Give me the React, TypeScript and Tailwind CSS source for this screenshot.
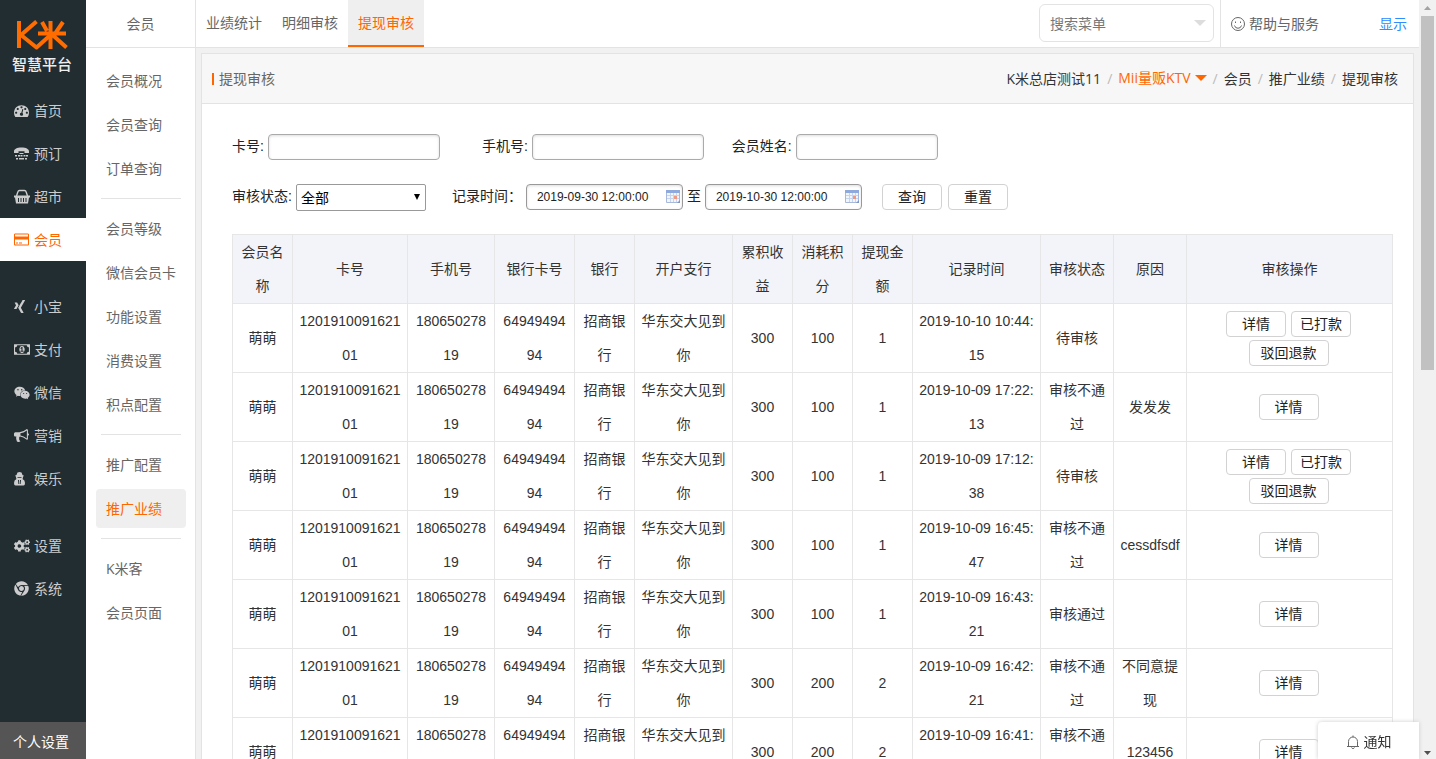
import type { ReactNode } from "react"
import { FaChrome, FaCogs, FaWeixin, FaXing } from "react-icons/fa"

function DashboardIcon({ className }: { className?: string }) {
  return (
    <svg viewBox="0 0 1792 1792" fill="currentColor" className={className}>
      <path d="M384 1152q0-53-37.5-90.5t-90.5-37.5-90.5 37.5-37.5 90.5 37.5 90.5 90.5 37.5 90.5-37.5 37.5-90.5zm192-448q0-53-37.5-90.5t-90.5-37.5-90.5 37.5-37.5 90.5 37.5 90.5 90.5 37.5 90.5-37.5 37.5-90.5zm428 481l101-382q6-26-7.5-48.5t-38.5-29.5-48 6.5-30 39.5l-101 382q-60 5-107 43.5t-63 98.5q-20 77 20 146t117 89 146-20 89-117q16-60-6-117t-72-91zm660-33q0-53-37.5-90.5t-90.5-37.5-90.5 37.5-37.5 90.5 37.5 90.5 90.5 37.5 90.5-37.5 37.5-90.5zm-640-640q0-53-37.5-90.5t-90.5-37.5-90.5 37.5-37.5 90.5 37.5 90.5 90.5 37.5 90.5-37.5 37.5-90.5zm448 192q0-53-37.5-90.5t-90.5-37.5-90.5 37.5-37.5 90.5 37.5 90.5 90.5 37.5 90.5-37.5 37.5-90.5zm320 448q0 261-141 483-19 29-54 29h-1402q-35 0-54-29-141-221-141-483 0-182 71-348t191-286 286-191 348-71 348 71 286 191 191 286 71 348z" />
    </svg>
  )
}

function PhoneIcon({ className }: { className?: string }) {
  return (
    <svg viewBox="0 0 15 15" fill="currentColor" className={className}>
      <path d="M0 7V5.500C0 3 3 1.500 7.500 1.500S15 3 15 5.500V7h-4.500V5.200h-6V7z" />
      <path d="M1 9h2v1.500H1zM4 9h2v1.500H4zM6.500 9h2v1.500h-2zM9.500 9h2v1.500h-2zM12 9h2v1.500h-2zM2 12h2v1.500H2zM5 12h5v1.500H5zM11 12h2v1.500h-2zM5.500 7h4v1h-4z" />
    </svg>
  )
}

function BasketIcon({ className }: { className?: string }) {
  return (
    <svg viewBox="0 0 16 15" fill="currentColor" className={className}>
      <path d="M2.500 7L4 2.500Q4.300 1.500 5.500 1.500h5Q11.700 1.500 12 2.500L13.500 7" fill="none" stroke="currentColor" strokeWidth="1.400" />
      <path
        fillRule="evenodd"
        d="M0 6.500h16v2h-1L14 14.500H2L1 8.500H0zM4 9v4h1V9zM6.500 9v4h1V9zM9 9v4h1V9zM11.500 9v4h1V9z"
      />
    </svg>
  )
}

function CardIcon({ className }: { className?: string }) {
  return (
    <svg viewBox="0 0 1920 1792" fill="currentColor" className={className}>
      <path d="M1760 128q66 0 113 47t47 113v1216q0 66-47 113t-113 47h-1600q-66 0-113-47t-47-113v-1216q0-66 47-113t113-47h1600zm-1600 128q-13 0-22.5 9.5t-9.5 22.5v224h1664v-224q0-13-9.5-22.5t-22.5-9.5h-1600zm1600 1280q13 0 22.5-9.5t9.5-22.5v-608h-1664v608q0 13 9.5 22.5t22.5 9.5h1600zm-1504-128v-128h256v128h-256zm384 0v-128h384v128h-384z" />
    </svg>
  )
}

function MoneyIcon({ className }: { className?: string }) {
  return (
    <svg viewBox="0 0 1920 1792" fill="currentColor" className={className}>
      <path d="M768 1152h384v-96h-128v-448h-114l-148 137 77 80q42-37 55-57h2v288h-128v96zm512-256q0 70-21 142t-59.5 134-101.5 101-138 39-138-39-101.5-101-59.5-134-21-142 21-142 59.5-134 101.5-101 138-39 138 39 101.5 101 59.5 134 21 142zm512 256v-512q-106 0-181-75t-75-181h-1152q0 106-75 181t-181 75v512q106 0 181 75t75 181h1152q0-106 75-181t181-75zm128-832v1152q0 26-19 45t-45 19h-1792q-26 0-45-19t-19-45v-1152q0-26 19-45t45-19h1792q26 0 45 19t19 45z" />
    </svg>
  )
}

function BullhornIcon({ className }: { className?: string }) {
  return (
    <svg viewBox="0 0 1792 1792" fill="currentColor" className={className}>
      <path d="M1664 640q53 0 90.5 37.5t37.5 90.5-37.5 90.5-90.5 37.5v384q0 52-38 90t-90 38q-417-347-812-380-58 19-91 66t-31 100.5 40 92.5q-20 33-23 65.5t6 58 33.5 55 48 50 61.5 50.5q-29 58-111.5 83t-168.5 11.5-132-55.5q-7-23-29.5-87.5t-32-94.5-23-89-15-101 3.5-98.5 22-110.5h-122q-66 0-113-47t-47-113v-192q0-66 47-113t113-47h480q435 0 896-384 52 0 90 38t38 90v384zm-128 604v-954q-394 302-768 343v270q377 42 768 341z" />
    </svg>
  )
}

function SpyIcon({ className }: { className?: string }) {
  return (
    <svg viewBox="0 0 15 15" fill="currentColor" className={className}>
      <path
        fillRule="evenodd"
        d="M3.500 1.500Q5.500 .5 7.500 1.500L8.500 4 10 4.800 9 5.800Q9 7.500 8.500 8 11 8.800 11 12 11 14.500 9.500 14.500h-8Q0 14.500 0 12 0 8.800 2.500 8 2 7.500 2 5.800L1 4.800 2.500 4zM4 9l.4 4h.8L5 9zM6 9l-.2 4h.8L7 9zM3.500 6v.8h4V6z"
      />
    </svg>
  )
}

function CalendarIcon({ className }: { className?: string }) {
  return (
    <svg viewBox="0 0 14 13" className={className}>
      <rect width="14" height="13" rx="1" fill="#a9b9dc" />
      <rect width="14" height="3" fill="#8fa9dd" />
      <rect x="1" y="3" width="12" height="9" fill="#f1f5fc" />
      <path d="M1 5.500h12M1 8.500h12M4.500 3v9M7.500 3v9M10.500 3v9" stroke="#c6d4ee" />
      <rect x="8" y="6" width="3" height="3" fill="#ee9a80" />
      <path d="M11 13l3-3v3z" fill="#8296c4" />
    </svg>
  )
}

const navGroups = [
  [
    { label: "首页", icon: DashboardIcon, size: "h-[15px] w-[15px]" },
    { label: "预订", icon: PhoneIcon, size: "h-[15px] w-[15px]" },
    { label: "超市", icon: BasketIcon, size: "h-[15px] w-4" },
    { label: "会员", icon: CardIcon, size: "h-[15px] w-[15px]", active: true },
  ],
  [
    { label: "小宝", icon: FaXing, size: "h-[15px] w-[11px]" },
    { label: "支付", icon: MoneyIcon, size: "h-[15px] w-4" },
    { label: "微信", icon: FaWeixin, size: "h-4 w-4" },
    { label: "营销", icon: BullhornIcon, size: "h-[15px] w-[15px]" },
    { label: "娱乐", icon: SpyIcon, size: "h-[15px] w-[15px]" },
  ],
  [
    { label: "设置", icon: FaCogs, size: "h-4 w-4" },
    { label: "系统", icon: FaChrome, size: "h-[15px] w-[15px]" },
  ],
]

const menuGroups = [
  ["会员概况", "会员查询", "订单查询"],
  ["会员等级", "微信会员卡", "功能设置", "消费设置", "积点配置"],
  ["推广配置", "推广业绩"],
  ["K米客", "会员页面"],
]

const tabs = ["业绩统计", "明细审核", "提现审核"]

const columns = [
  { title: "会员名称", width: "w-[60px]" },
  { title: "卡号", width: "w-[115px]" },
  { title: "手机号", width: "w-[87px]" },
  { title: "银行卡号", width: "w-[80px]" },
  { title: "银行", width: "w-[60px]" },
  { title: "开户支行", width: "w-[98px]" },
  { title: "累积收益", width: "w-[60px]" },
  { title: "消耗积分", width: "w-[60px]" },
  { title: "提现金额", width: "w-[60px]" },
  { title: "记录时间", width: "w-[128px]" },
  { title: "审核状态", width: "w-[73px]" },
  { title: "原因", width: "w-[73px]" },
  { title: "审核操作", width: "" },
]

const records = [
  { points: 100, amount: 1, time: "2019-10-10 10:44:15", status: "待审核", reason: "" },
  { points: 100, amount: 1, time: "2019-10-09 17:22:13", status: "审核不通过", reason: "发发发" },
  { points: 100, amount: 1, time: "2019-10-09 17:12:38", status: "待审核", reason: "" },
  { points: 100, amount: 1, time: "2019-10-09 16:45:47", status: "审核不通过", reason: "cessdfsdf" },
  { points: 100, amount: 1, time: "2019-10-09 16:43:21", status: "审核通过", reason: "" },
  { points: 200, amount: 2, time: "2019-10-09 16:42:21", status: "审核不通过", reason: "不同意提现" },
  { points: 200, amount: 2, time: "2019-10-09 16:41:08", status: "审核不通过", reason: "123456" },
]

function Button({ children, wide }: { children: ReactNode; wide?: boolean }) {
  return (
    <button
      type="button"
      className={`h-[26px] rounded border border-[#d2d2d2] bg-white text-sm leading-6 text-[#222] ${wide ? "w-20" : "w-[60px]"}`}
    >
      {children}
    </button>
  )
}

function TextField({ id, label, width }: { id: string; label: string; width: string }) {
  return (
    <div className="flex gap-1">
      <label htmlFor={id}>{label}</label>
      <input
        id={id}
        type="text"
        className={`h-[26px] rounded border border-[#aaa] bg-white px-2 shadow-[inset_0_1px_3px_#ddd] ${width}`}
      />
    </div>
  )
}

function DateField({ label, value }: { label: string; value: string }) {
  return (
    <div className="relative">
      <input
        type="text"
        aria-label={label}
        defaultValue={value}
        className="block h-[26px] w-[157px] rounded border border-[#999] bg-white pl-[10px] text-xs text-[#222] shadow-[inset_0_1px_3px_#ddd]"
      />
      <CalendarIcon className="absolute top-[6px] right-[3px] h-[13px] w-[14px]" />
    </div>
  )
}

function Logo() {
  return (
    <div className="flex h-[89px] flex-col items-center pt-5 pr-[2px]">
      <svg viewBox="0 0 52 30" fill="none" stroke="#ff6c00" strokeWidth="4" className="h-[30px] w-[52px]">
        <path d="M3 1v27M20.500 1.500 5 15l15.500 12.500L34.500 15" strokeLinejoin="round" />
        <path d="M34.500 1v28M22 13.500h28M26 2l5 9M47 2l-7.500 11M36 14.500l14.500 13" />
      </svg>
      <div className="mt-1 text-[15px] leading-5 font-medium text-[#eee]">智慧平台</div>
    </div>
  )
}

function MainNav() {
  return (
    <aside className="flex w-[86px] shrink-0 flex-col bg-[#222d32]">
      <Logo />
      <nav className="flex flex-1 flex-col gap-6">
        {navGroups.map((group) => (
          <div key={group[0].label}>
            {group.map((item) => (
              <a
                key={item.label}
                href="#"
                className={`flex h-[43px] items-center gap-[5px] pl-[14px] ${"active" in item ? "bg-white text-[#ff6600]" : "text-[#ccc]"}`}
              >
                <span className="flex w-[15px]">
                  <item.icon className={`shrink-0 ${item.size}`} />
                </span>
                {item.label}
              </a>
            ))}
          </div>
        ))}
      </nav>
      <button type="button" className="h-[37px] bg-[#555] pt-[2px] pr-1 text-white">
        个人设置
      </button>
    </aside>
  )
}

function SubMenu() {
  return (
    <aside className="w-[110px] shrink-0 border-r border-[#e3e3e3] bg-white text-[#666]">
      <h2 className="h-12 border-b border-[#e3e3e3] text-center leading-[47px]">会员</h2>
      <nav className="pt-[13px]">
        {menuGroups.map((group, index) => (
          <div key={group[0]}>
            {index > 0 && <hr className="my-[10px] mr-[14px] ml-[15px] border-[#e3e3e3]" />}
            <div className="flex flex-col gap-[5px] pr-[9px] pl-[10px]">
              {group.map((item) => (
                <a
                  key={item}
                  href="#"
                  className={`h-[39px] rounded-sm pl-[10px] leading-[39px] whitespace-nowrap ${item === "推广业绩" ? "bg-[#efefef] text-[#ff6600]" : ""}`}
                >
                  {item}
                </a>
              ))}
            </div>
          </div>
        ))}
      </nav>
    </aside>
  )
}

function TopBar() {
  return (
    <header className="flex h-12 shrink-0 border-b border-[#e3e3e3] bg-white text-[#666]">
      <nav className="flex flex-1">
        {tabs.map((tab) => (
          <a
            key={tab}
            href="#"
            className={`px-[10px] leading-[46px] ${tab === "提现审核" ? "border-b-2 border-[#ff6600] bg-[#efefef] text-[#ff6600]" : ""}`}
          >
            {tab}
          </a>
        ))}
      </nav>
      <div className="relative mt-1 mr-[6px] h-[38px] w-[175px]">
        <input
          type="text"
          aria-label="搜索菜单"
          placeholder="搜索菜单"
          className="h-full w-full rounded-md border border-[#e3e3e3] px-[10px] placeholder:text-[#777]"
        />
        <svg viewBox="0 0 12 6" className="absolute top-4 right-2 h-[6px] w-3">
          <path d="M0 0h12L6 6z" fill="#ddd" />
        </svg>
      </div>
      <div className="flex w-[199px] items-center justify-between border-l border-[#e3e3e3] pr-3 pl-[10px]">
        <a href="#" className="flex items-center gap-1">
          <svg viewBox="0 0 14 14" fill="none" stroke="#666" className="h-[14px] w-[14px]">
            <circle cx="7" cy="7" r="6.500" />
            <path d="M3.500 8.500a3.600 3.600 0 0 0 7 0M4.500 4.500v1.500M9.500 4.500v1.500" />
          </svg>
          帮助与服务
        </a>
        <a href="#" className="text-[#2d8cff]">
          显示
        </a>
      </div>
    </header>
  )
}

function Breadcrumb() {
  return (
    <nav className="flex items-center gap-[6px] text-[#333]">
      <a href="#">K米总店测试11</a>
      <span className="text-[#bbb]">/</span>
      <a href="#" className="flex items-center gap-1 pb-[2px] text-[#ff6600]">
        Mii量贩KTV
        <svg viewBox="0 0 12 6" className="h-[6px] w-3">
          <path d="M0 0h12L6 6z" fill="currentColor" />
        </svg>
      </a>
      <span className="text-[#bbb]">/</span>
      <a href="#">会员</a>
      <span className="text-[#bbb]">/</span>
      <a href="#">推广业绩</a>
      <span className="text-[#bbb]">/</span>
      <span>提现审核</span>
    </nav>
  )
}

function Filters() {
  return (
    <form className="font-['Liberation_Sans','Noto_Sans_CJK_SC',sans-serif] leading-6 text-[#222]">
      <div className="flex">
        <TextField id="card" label="卡号:" width="w-[172px]" />
        <div className="ml-[42px]">
          <TextField id="phone" label="手机号:" width="w-[172px]" />
        </div>
        <div className="ml-7">
          <TextField id="name" label="会员姓名:" width="w-[142px]" />
        </div>
      </div>
      <div className="mt-6 flex">
        <div className="flex gap-1">
          <label htmlFor="status">审核状态:</label>
          <div className="relative">
            <select
              id="status"
              className="block h-[27px] w-[130px] appearance-none rounded-xs border border-[#999] bg-white pl-1 text-black"
            >
              <option>全部</option>
              <option>待审核</option>
              <option>审核通过</option>
              <option>审核不通过</option>
            </select>
            <svg viewBox="0 0 6 6" className="pointer-events-none absolute top-[10px] right-[6px] h-[6px] w-[6px]">
              <path d="M0 0h6L3 6z" />
            </svg>
          </div>
        </div>
        <div className="ml-[26px] flex gap-1">
          <span>记录时间：</span>
          <DateField label="开始时间" value="2019-09-30 12:00:00" />
          <span>至</span>
          <DateField label="结束时间" value="2019-10-30 12:00:00" />
        </div>
        <div className="ml-5 flex gap-[6px]">
          <Button>查询</Button>
          <Button>重置</Button>
        </div>
      </div>
    </form>
  )
}

function RecordTable() {
  const cell = "border border-[#e6e6e6] px-[5px] py-0 font-normal"
  return (
    <table className="mt-[23px] w-full table-fixed border-collapse text-center font-['Liberation_Sans','Noto_Sans_CJK_SC',sans-serif] leading-[34px] break-all text-[#333]">
      <thead>
        <tr className="bg-[#f3f4f9]">
          {columns.map((column) => (
            <th key={column.title} className={`${cell} ${column.width}`}>
              {column.title}
            </th>
          ))}
        </tr>
      </thead>
      <tbody>
        {records.map((record) => (
          <tr key={record.time} className="h-[69px]">
            <td className={cell}>萌萌</td>
            <td className={cell}>120191009162101</td>
            <td className={cell}>18065027819</td>
            <td className={cell}>6494949494</td>
            <td className={cell}>招商银行</td>
            <td className={cell}>华东交大见到你</td>
            <td className={cell}>300</td>
            <td className={cell}>{record.points}</td>
            <td className={cell}>{record.amount}</td>
            <td className={cell}>{record.time}</td>
            <td className={cell}>{record.status}</td>
            <td className={cell}>{record.reason}</td>
            <td className={cell}>
              <div className="flex flex-wrap justify-center gap-x-[5px] gap-y-[3px] pr-[2px]">
                <Button>详情</Button>
                {record.status === "待审核" && (
                  <>
                    <Button>已打款</Button>
                    <Button wide>驳回退款</Button>
                  </>
                )}
              </div>
            </td>
          </tr>
        ))}
      </tbody>
    </table>
  )
}

export default function App() {
  return (
    <div className="flex h-screen overflow-hidden bg-[#f1f1f1] font-['Open_Sans','Noto_Sans_CJK_SC',sans-serif] text-sm">
      <MainNav />
      <SubMenu />
      <div className="flex min-w-0 flex-1 flex-col">
        <TopBar />
        <main className="min-h-0 flex-1 overflow-hidden p-[5px]">
          <section className="border border-[#e3e3e3] bg-white">
            <div className="flex h-[50px] items-center justify-between border-b border-[#e3e3e3] bg-[#f7f7f7] pr-[15px] pl-[10px]">
              <h1 className="flex items-center gap-[5px] text-[#666]">
                <span className="h-3 w-[2px] bg-[#ff6600]" />
                提现审核
              </h1>
              <Breadcrumb />
            </div>
            <div className="pt-[30px] pr-5 pb-5 pl-[30px]">
              <Filters />
              <RecordTable />
            </div>
          </section>
        </main>
      </div>

      {/* scroll track */}
      <div className="flex w-[17px] shrink-0 flex-col items-center justify-between bg-[#f1f1f1]">
        <div className="flex w-full flex-col items-center">
          <svg viewBox="0 0 17 16" className="h-4 w-[17px]">
            <path d="M5 10h7L8.500 6z" fill="#a3a3a3" />
          </svg>
          <div className="h-[354px] w-[13px] bg-[#c1c1c1]" />
        </div>
        <svg viewBox="0 0 17 16" className="h-4 w-[17px]">
          <path d="M5 8h7l-3.500 4z" fill="#505050" />
        </svg>
      </div>

      <button
        type="button"
        className="fixed right-[17px] bottom-0 flex h-[37px] w-[101px] items-center justify-center gap-1 rounded-tl bg-white pt-[2px] text-[#333] shadow-[0_0_4px_#ccc]"
      >
        <svg viewBox="0 0 14 14" fill="none" stroke="#666" className="h-[14px] w-[14px]">
          <path d="M1 11.500h12M2.500 11V6.500a4.500 4.500 0 0 1 9 0V11M7 .5V2M5.500 12.500a1.600 1.600 0 0 0 3 0" />
        </svg>
        通知
      </button>
    </div>
  )
}
